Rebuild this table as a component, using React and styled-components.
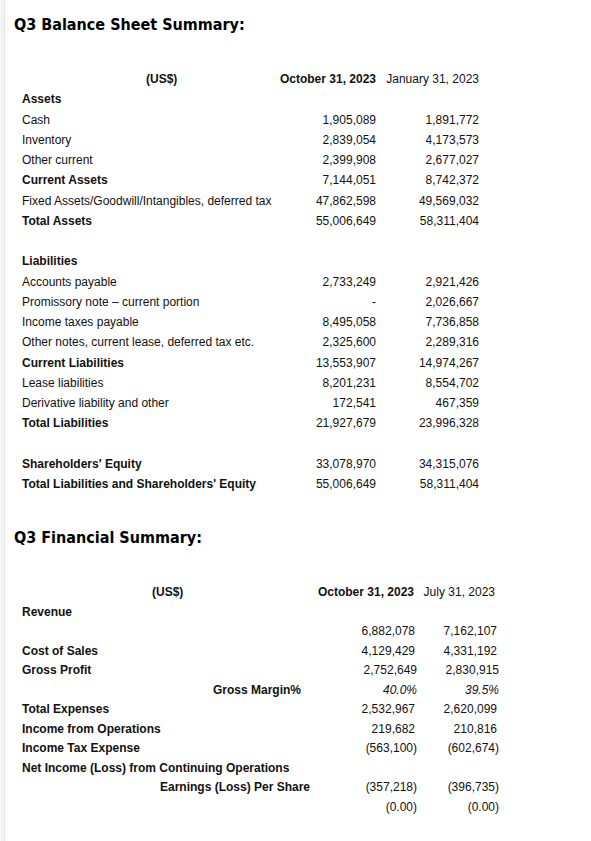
import React from 'react';
import styled, { createGlobalStyle } from 'styled-components';

const GlobalStyle = createGlobalStyle`
  html, body {
    margin: 0;
    padding: 0;
    background: #ffffff;
  }
  body {
    font-family: "Liberation Sans", Arial, sans-serif;
    color: #111;
  }
`;

const balanceRows = [
  { label: 'Assets', bold: true },
  { label: 'Cash', a: '1,905,089', b: '1,891,772' },
  { label: 'Inventory', a: '2,839,054', b: '4,173,573' },
  { label: 'Other current', a: '2,399,908', b: '2,677,027' },
  { label: 'Current Assets', bold: true, a: '7,144,051', b: '8,742,372' },
  { label: 'Fixed Assets/Goodwill/Intangibles, deferred tax', a: '47,862,598', b: '49,569,032' },
  { label: 'Total Assets', bold: true, a: '55,006,649', b: '58,311,404' },
  { label: '' },
  { label: 'Liabilities', bold: true },
  { label: 'Accounts payable', a: '2,733,249', b: '2,921,426' },
  { label: 'Promissory note \u2013 current portion', a: '-', b: '2,026,667' },
  { label: 'Income taxes payable', a: '8,495,058', b: '7,736,858' },
  { label: 'Other notes, current lease, deferred tax etc.', a: '2,325,600', b: '2,289,316' },
  { label: 'Current Liabilities', bold: true, a: '13,553,907', b: '14,974,267' },
  { label: 'Lease liabilities', a: '8,201,231', b: '8,554,702' },
  { label: 'Derivative liability and other', a: '172,541', b: '467,359' },
  { label: 'Total Liabilities', bold: true, a: '21,927,679', b: '23,996,328' },
  { label: '' },
  { label: "Shareholders' Equity", bold: true, a: '33,078,970', b: '34,315,076' },
  { label: "Total Liabilities and Shareholders' Equity", bold: true, a: '55,006,649', b: '58,311,404' },
];

const financialRows = [
  { label: 'Revenue' },
  { label: '', a: '6,882,078', b: '7,162,107' },
  { label: 'Cost of Sales', a: '4,129,429', b: '4,331,192' },
  { label: 'Gross Profit', a: '2,752,649', b: '2,830,915', shift: true },
  { label: 'Gross Margin%', right: 12, a: '40.0%', b: '39.5%', shift: true, italic: true },
  { label: 'Total Expenses', a: '2,532,967', b: '2,620,099' },
  { label: 'Income from Operations', a: '219,682', b: '210,816' },
  { label: 'Income Tax Expense', a: '(563,100)', b: '(602,674)', shift: true },
  { label: 'Net Income (Loss) from Continuing Operations' },
  { label: 'Earnings (Loss) Per Share', right: 3, a: '(357,218)', b: '(396,735)', shift: true },
  { label: '', a: '(0.00)', b: '(0.00)', shift: true },
];

const Page = styled.div`
  min-height: 841px;
  margin-left: 4px;
  border-left: 1px solid #e3e3e3;
  box-shadow: -4px 0 0 #f4f4f4;
  padding: 15px 0 0 10px;
  box-sizing: border-box;
`;

const Section = styled.section`
  margin-bottom: 34px;
`;

const Heading = styled.h2`
  margin: 0 0 34px -1px;
  font-family: "DejaVu Sans Condensed", "DejaVu Sans", Verdana, sans-serif;
  font-stretch: condensed;
  font-size: 16px;
  line-height: 20px;
  font-weight: bold;
  color: #000;
`;

const Table = styled.table`
  margin-left: 4px;
  border-collapse: collapse;
  table-layout: fixed;
  font-size: 12px;
  color: #111;
`;

const Row = styled.tr`
  height: ${(p) => p.$h}px;
`;

const LabelCell = styled.td`
  padding: 0 ${(p) => (p.$right != null ? p.$right : 3)}px 0 ${(p) => (p.$left != null ? p.$left : 3)}px;
  height: ${(p) => p.$h}px;
  font-weight: ${(p) => (p.$bold ? 'bold' : 'normal')};
  text-align: ${(p) => (p.$align || 'left')};
  white-space: nowrap;
  line-height: 14px;
`;

const NumCell = styled.td`
  padding: 0 ${(p) => (p.$pr != null ? p.$pr : p.$shift ? 1 : 3)}px 0 0;
  height: ${(p) => p.$h}px;
  text-align: right;
  white-space: nowrap;
  font-weight: ${(p) => (p.$bold ? 'bold' : 'normal')};
  font-style: ${(p) => (p.$italic ? 'italic' : 'normal')};
  line-height: 14px;
`;

const BalanceSheet = () => {
  const h = 20.25;
  return (
    <Table>
      <colgroup>
        <col style={{ width: 259 }} />
        <col style={{ width: 101 }} />
        <col style={{ width: 103 }} />
      </colgroup>
      <tbody>
        <Row $h={h}>
          <LabelCell $h={h} $bold $left={127}>(US$)</LabelCell>
          <NumCell $h={h} $bold>October 31, 2023</NumCell>
          <NumCell $h={h}>January 31, 2023</NumCell>
        </Row>
        {balanceRows.map((r, i) => (
          <Row key={i} $h={h}>
            <LabelCell $h={h} $bold={r.bold}>{r.label}</LabelCell>
            <NumCell $h={h}>{r.a}</NumCell>
            <NumCell $h={h}>{r.b}</NumCell>
          </Row>
        ))}
      </tbody>
    </Table>
  );
};

const FinancialSummary = () => {
  const h = 19.55;
  return (
    <Table>
      <colgroup>
        <col style={{ width: 294 }} />
        <col style={{ width: 105 }} />
        <col style={{ width: 82 }} />
      </colgroup>
      <tbody>
        <Row $h={h}>
          <LabelCell $h={h} $bold $left={133}>(US$)</LabelCell>
          <NumCell $h={h} $bold $pr={4}>October 31, 2023</NumCell>
          <NumCell $h={h} $pr={5}>July 31, 2023</NumCell>
        </Row>
        {financialRows.map((r, i) => (
          <Row key={i} $h={h}>
            <LabelCell
              $h={h}
              $bold
              $align={r.right != null ? 'right' : 'left'}
              $right={r.right}
            >
              {r.label}
            </LabelCell>
            <NumCell $h={h} $shift={r.shift} $italic={r.italic}>{r.a}</NumCell>
            <NumCell $h={h} $shift={r.shift} $italic={r.italic}>{r.b}</NumCell>
          </Row>
        ))}
      </tbody>
    </Table>
  );
};

export default function App() {
  return (
    <>
      <GlobalStyle />
      <Page>
        <Section>
          <Heading>Q3 Balance Sheet Summary:</Heading>
          <BalanceSheet />
        </Section>
        <Section>
          <Heading>Q3 Financial Summary:</Heading>
          <FinancialSummary />
        </Section>
      </Page>
    </>
  );
}
